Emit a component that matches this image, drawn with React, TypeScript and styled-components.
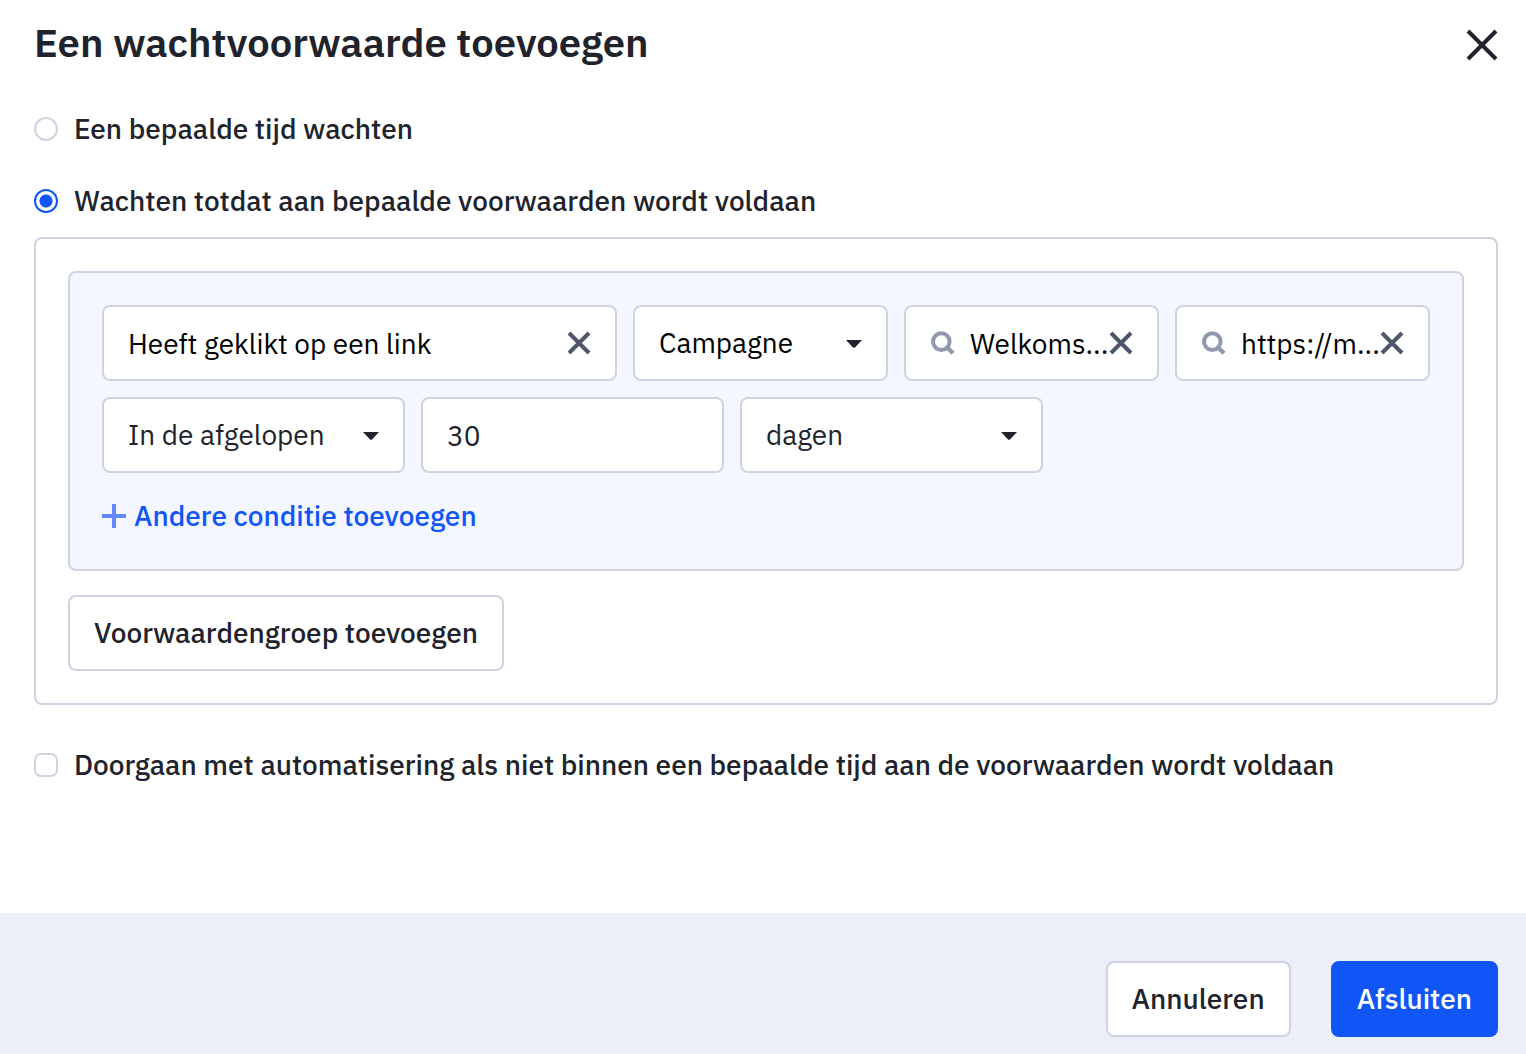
import React, { useState } from "react";
import styled, { createGlobalStyle, css } from "styled-components";

const colors = {
  ink: "#20232c",
  black: "#000000",
  line: "#cfd2e1",
  blue: "#1055f6",
  plus: "#6388f7",
  slate: "#50566a",
  muted: "#9299ae",
  tint: "#f4f7ff",
  footer: "#edeff8",
};

const GlobalStyle = createGlobalStyle`
  *, *::before, *::after { box-sizing: border-box; }
  body {
    margin: 0;
    background: #ffffff;
    color: ${colors.ink};
    font-family: "IBM Plex Sans", Roboto, "Noto Sans", sans-serif;
    font-size: 28px;
    line-height: 36px;
  }
  button, input, select { font: inherit; color: inherit; margin: 0; }
  svg { display: block; flex: none; }
`;

const Dialog = styled.form`
  min-height: 100vh;
  display: flex;
  flex-direction: column;
`;

const Body = styled.main`
  flex: 1;
  padding: 16px 28px 32px 34px;
`;

const Header = styled.header`
  display: flex;
  align-items: flex-start;
  justify-content: space-between;
  margin-bottom: 37px;
`;

const Title = styled.h1`
  margin: 0;
  font-size: 40px;
  line-height: 52px;
  font-weight: 600;
`;

const IconButton = styled.button`
  display: flex;
  flex: none;
  padding: 0;
  border: 0;
  background: none;
  cursor: pointer;
`;

const CloseButton = styled(IconButton)`
  padding: 13px 0;
`;

const Choice = styled.label`
  display: flex;
  align-items: center;
  gap: 16px;
  font-weight: 500;
`;

const Choices = styled.div`
  display: grid;
  gap: 36px;
  margin-bottom: 18px;
`;

const tick = css`
  appearance: none;
  flex: none;
  width: 24px;
  height: 24px;
  border: 2px solid ${colors.line};
  background: #ffffff;
`;

const Radio = styled.input.attrs({ type: "radio" })`
  ${tick}
  border-radius: 50%;
  &:checked {
    border-color: ${colors.blue};
    background: radial-gradient(circle, ${colors.blue} 6px, #ffffff 7px);
  }
`;

const Checkbox = styled.input.attrs({ type: "checkbox" })`
  ${tick}
  border-radius: 7px;
  &:checked {
    border-color: ${colors.blue};
    background: ${colors.blue};
  }
`;

const Panel = styled.section`
  padding: 32px;
  border: 2px solid ${colors.line};
  border-radius: 8px;
  margin-bottom: 42px;
`;

const Group = styled.div`
  display: grid;
  gap: 16px;
  padding: 32px;
  margin-bottom: 24px;
  border: 2px solid ${colors.line};
  border-radius: 8px;
  background: ${colors.tint};
`;

const ConditionRow = styled.div`
  display: grid;
  grid-template-columns: minmax(0, 101fr) repeat(3, minmax(0, 50fr));
  gap: 16px;
`;

const PeriodRow = styled.div`
  display: grid;
  grid-template-columns: repeat(3, minmax(0, 1fr));
  gap: 16px;
  max-width: 941px;
`;

const Field = styled.div<{ $tone?: string }>`
  position: relative;
  display: flex;
  align-items: center;
  height: 76px;
  padding: 0 24px;
  border: 2px solid ${colors.line};
  border-radius: 8px;
  background: #ffffff;
  color: ${(p) => p.$tone || colors.ink};
`;

const TextInput = styled.input`
  flex: 1;
  min-width: 0;
  width: 100%;
  height: 72px;
  padding: 0;
  border: 0;
  outline: 0;
  background: transparent;
`;

const SearchInput = styled(TextInput)`
  margin-left: 14px;
`;

const Select = styled.select`
  appearance: none;
  flex: 1;
  min-width: 0;
  height: 72px;
  padding: 0;
  border: 0;
  outline: 0;
  background: transparent;
`;

const AddCondition = styled.button`
  display: flex;
  align-items: center;
  justify-self: start;
  gap: 8px;
  height: 48px;
  padding: 6px 0 0;
  border: 0;
  background: none;
  color: ${colors.blue};
  font-weight: 500;
  cursor: pointer;
`;

const Button = styled.button<{ $primary?: boolean }>`
  height: 76px;
  padding: 0 24px;
  border: 2px solid ${(p) => (p.$primary ? colors.blue : colors.line)};
  border-radius: 8px;
  background: ${(p) => (p.$primary ? colors.blue : "#ffffff")};
  color: ${(p) => (p.$primary ? "#ffffff" : colors.ink)};
  font-weight: 500;
  cursor: pointer;
`;

const Footer = styled.footer`
  display: flex;
  justify-content: flex-end;
  gap: 40px;
  padding: 48px 28px 17px;
  background: ${colors.footer};
`;

const Cross = ({ size, color, weight }: { size: number; color: string; weight: number }) => (
  <svg width={size} height={size} viewBox={`0 0 ${size} ${size}`} aria-hidden="true">
    <path
      d={`M2 2L${size - 2} ${size - 2}M${size - 2} 2L2 ${size - 2}`}
      stroke={color}
      strokeWidth={weight}
      fill="none"
    />
  </svg>
);

const Caret = () => (
  <svg width="16" height="16" viewBox="0 0 16 16" aria-hidden="true">
    <path d="M0 5H16L9.2 12.2Q8 13.4 6.8 12.2Z" fill={colors.ink} />
  </svg>
);

const SearchIcon = () => (
  <svg width="26" height="26" viewBox="0 0 26 26" aria-hidden="true">
    <circle cx="11.3" cy="11.6" r="8.3" stroke={colors.muted} strokeWidth="4" fill="none" />
    <path d="M16.5 16.8L23 23.3" stroke={colors.muted} strokeWidth="4.4" fill="none" />
  </svg>
);

const PlusIcon = () => (
  <svg width="24" height="24" viewBox="0 0 24 24" aria-hidden="true">
    <path d="M12 0V24M0 12H24" stroke={colors.plus} strokeWidth="4" fill="none" />
  </svg>
);

function ClearButton({ label, onClick }: { label: string; onClick: () => void }) {
  return (
    <IconButton type="button" aria-label={label} onClick={onClick}>
      <Cross size={24} color={colors.slate} weight={4} />
    </IconButton>
  );
}

function SearchField({ label, initial }: { label: string; initial: string }) {
  const [value, setValue] = useState(initial);
  return (
    <Field $tone={colors.black}>
      <SearchIcon />
      <SearchInput aria-label={label} value={value} onChange={(e) => setValue(e.target.value)} />
      <ClearButton label={`${label} wissen`} onClick={() => setValue("")} />
    </Field>
  );
}

function SelectField({ label, option, tone }: { label: string; option: string; tone?: string }) {
  return (
    <Field $tone={tone}>
      <Select aria-label={label}>
        <option>{option}</option>
      </Select>
      <Caret />
    </Field>
  );
}

export default function App() {
  const [mode, setMode] = useState("conditions");
  const [trigger, setTrigger] = useState("Heeft geklikt op een link");

  return (
    <>
      <GlobalStyle />
      <Dialog onSubmit={(e) => e.preventDefault()}>
        <Body>
          <Header>
            <Title>Een wachtvoorwaarde toevoegen</Title>
            <CloseButton type="button" aria-label="Sluiten">
              <Cross size={32} color={colors.ink} weight={4} />
            </CloseButton>
          </Header>

          <Choices role="radiogroup">
            <Choice>
              <Radio name="mode" checked={mode === "time"} onChange={() => setMode("time")} />
              Een bepaalde tijd wachten
            </Choice>
            <Choice>
              <Radio
                name="mode"
                checked={mode === "conditions"}
                onChange={() => setMode("conditions")}
              />
              Wachten totdat aan bepaalde voorwaarden wordt voldaan
            </Choice>
          </Choices>

          <Panel>
            <Group>
              <ConditionRow>
                <Field $tone={colors.black}>
                  <TextInput
                    aria-label="Voorwaarde"
                    value={trigger}
                    onChange={(e) => setTrigger(e.target.value)}
                  />
                  <ClearButton label="Voorwaarde wissen" onClick={() => setTrigger("")} />
                </Field>
                <SelectField label="Bron" option="Campagne" tone={colors.black} />
                <SearchField label="Campagne" initial="Welkoms..." />
                <SearchField label="Link" initial="https://m..." />
              </ConditionRow>
              <PeriodRow>
                <SelectField label="Periode" option="In de afgelopen" />
                <Field>
                  <TextInput aria-label="Aantal" inputMode="numeric" defaultValue="30" />
                </Field>
                <SelectField label="Eenheid" option="dagen" />
              </PeriodRow>
              <AddCondition type="button">
                <PlusIcon />
                Andere conditie toevoegen
              </AddCondition>
            </Group>
            <Button type="button">Voorwaardengroep toevoegen</Button>
          </Panel>

          <Choice>
            <Checkbox />
            Doorgaan met automatisering als niet binnen een bepaalde tijd aan de voorwaarden wordt voldaan
          </Choice>
        </Body>
        <Footer>
          <Button type="button">Annuleren</Button>
          <Button type="submit" $primary>
            Afsluiten
          </Button>
        </Footer>
      </Dialog>
    </>
  );
}
